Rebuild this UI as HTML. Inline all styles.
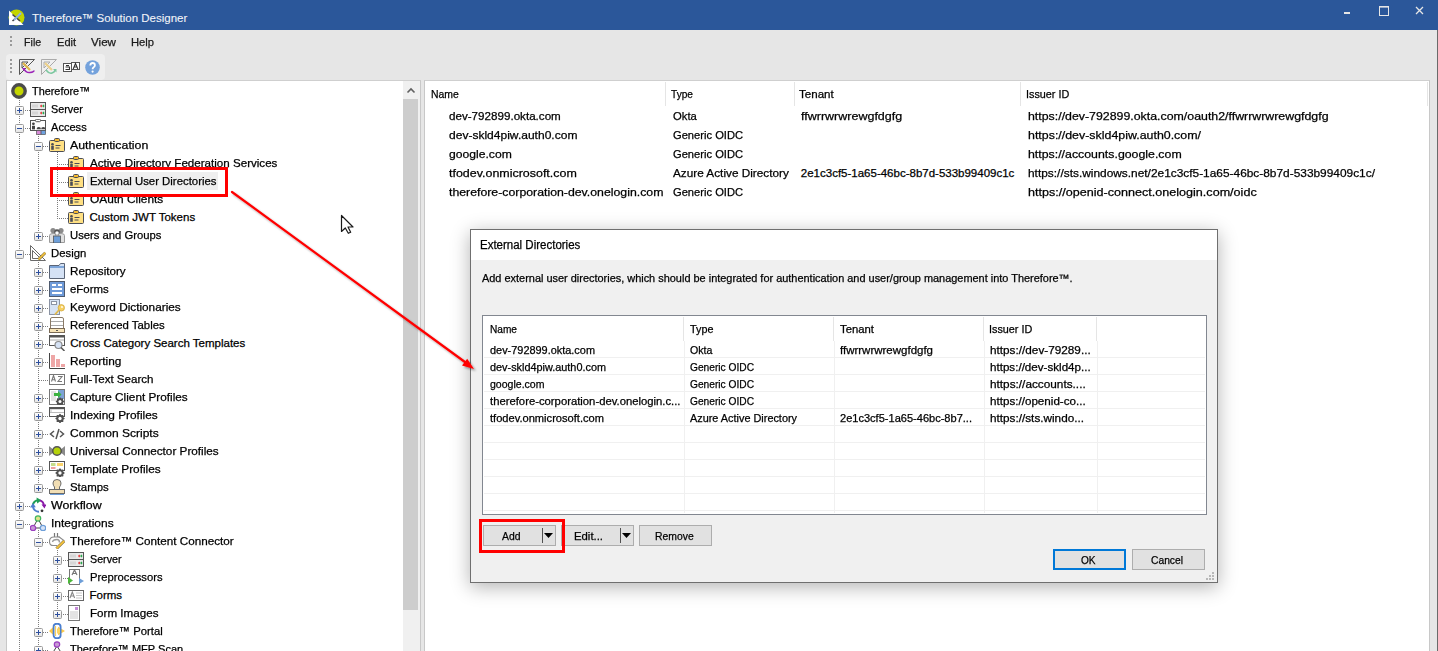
<!DOCTYPE html>
<html><head><meta charset="utf-8"><title>Therefore Solution Designer</title>
<style>
html,body{margin:0;padding:0}
body{width:1438px;height:651px;position:relative;overflow:hidden;background:#e6e6e6;font-family:"Liberation Sans",sans-serif}
.t{position:absolute;white-space:pre;line-height:14px;font-family:"Liberation Sans",sans-serif;-webkit-text-stroke:0.25px currentColor}
</style></head><body>
<div style="position:absolute;left:0px;top:0px;width:1438px;height:30px;background:#2b579a"></div>
<div class="t" style="left:32px;top:11px;font-size:11.5px;color:#f0f3f8;-webkit-text-stroke:0.1px #f0f3f8">Therefore™ Solution Designer</div>
<svg style="position:absolute;left:8px;top:9px;" width="17" height="17" viewBox="0 0 17 17"><circle cx="8.5" cy="8.5" r="8" fill="#c3d500"/><path d="M1 1.5V16H15.5Z" fill="#fff"/><path d="M4.5 5.5L12 12M12 5.5L4.5 12" stroke="#444" stroke-width="1.6"/><path d="M13 4L6 11" stroke="#8fb4e6" stroke-width="2"/></svg>
<svg style="position:absolute;left:1340px;top:8px;overflow:visible" width="90" height="10" viewBox="0 0 90 10"><rect x="4" y="4" width="6" height="2" fill="#e6e6e6"/><rect x="39.5" y="-1.5" width="9" height="9" fill="none" stroke="#e6e6e6" stroke-width="1"/><rect x="39" y="-2" width="10" height="1.6" fill="#e6e6e6"/><path d="M76 -1L83 6M83 -1L76 6" stroke="#e6e6e6" stroke-width="1.3"/></svg>
<div style="position:absolute;left:1437px;top:30px;width:1px;height:621px;background:#6a6a6a"></div>
<div style="position:absolute;left:10px;top:36px;width:2px;height:2px;background:#9a9a9a"></div>
<div style="position:absolute;left:10px;top:40px;width:2px;height:2px;background:#9a9a9a"></div>
<div style="position:absolute;left:10px;top:44px;width:2px;height:2px;background:#9a9a9a"></div>
<div style="position:absolute;left:6px;top:54px;width:99px;height:26px;background:#efefef;border-radius:4px"></div>
<div style="position:absolute;left:10px;top:59px;width:2px;height:2px;background:#9a9a9a"></div>
<div style="position:absolute;left:10px;top:63px;width:2px;height:2px;background:#9a9a9a"></div>
<div style="position:absolute;left:10px;top:67px;width:2px;height:2px;background:#9a9a9a"></div>
<div style="position:absolute;left:10px;top:71px;width:2px;height:2px;background:#9a9a9a"></div>
<svg style="position:absolute;left:19px;top:59px;" width="16" height="16" viewBox="0 0 16 16"><path d="M0.5 15.5V0.5H15.5Z M3 3h6L3 9z" fill="none" stroke="#555" stroke-width="1"/><path d="M4 4l7 7" stroke="#e0b64a" stroke-width="2.2"/><path d="M5 10q2 4 6 3.5t4-2" fill="none" stroke="#9b22b8" stroke-width="1.6"/><path d="M3 9l3.5 0 -1.5 3z" fill="#9b22b8"/></svg>
<svg style="position:absolute;left:41px;top:59px;" width="16" height="16" viewBox="0 0 16 16"><path d="M0.5 15.5V0.5H15.5Z M3 3h6L3 9z" fill="none" stroke="#aaa" stroke-width="1"/><path d="M4 4l7 7" stroke="#ecd08a" stroke-width="2.2"/><path d="M5 11q3 4 6 3t3-3" fill="none" stroke="#7cc8a0" stroke-width="1.6"/><path d="M12 10l3.5 0 0 3.5z" fill="#7cc8a0"/></svg>
<svg style="position:absolute;left:63px;top:62px;" width="17" height="11" viewBox="0 0 17 11"><rect x="0.5" y="1.5" width="8" height="8" fill="#fff" stroke="#555"/><path d="M2.5 7.5h4v-2.5h-4M3 3.5h3" fill="none" stroke="#333" stroke-width="1.1"/><rect x="8.5" y="0.5" width="8" height="7" fill="#fff" stroke="#555"/><path d="M10.2 7l2.3-5.5 2.3 5.5M11 5h3" fill="none" stroke="#333" stroke-width="1.1"/></svg>
<svg style="position:absolute;left:85px;top:60px;" width="16" height="16" viewBox="0 0 16 16"><circle cx="7.5" cy="7.5" r="7.3" fill="#74a2dc"/><path d="M5.3 5.6q0-2.6 2.3-2.6t2.3 2.3q0 1.3-1.2 2t-1.1 1.9" fill="none" stroke="#fff" stroke-width="1.8"/><circle cx="7.6" cy="11.6" r="1.1" fill="#fff"/></svg>
<div class="t" style="left:23.5px;top:35px;font-size:11.5px;color:#1a1a1a;transform:scaleX(0.9282);transform-origin:0 0;">File</div>
<div class="t" style="left:56.6px;top:35px;font-size:11.5px;color:#1a1a1a;transform:scaleX(0.9633);transform-origin:0 0;">Edit</div>
<div class="t" style="left:91px;top:35px;font-size:11.5px;color:#1a1a1a;transform:scaleX(1.0114);transform-origin:0 0;">View</div>
<div class="t" style="left:131.4px;top:35px;font-size:11.5px;color:#1a1a1a;transform:scaleX(0.9765);transform-origin:0 0;">Help</div>
<div style="position:absolute;left:6px;top:80px;width:415px;height:571px;background:#fff;border-left:1px solid #c8c8c8;border-top:1px solid #cfcfcf;border-right:1px solid #c8c8c8;box-sizing:border-box"></div>
<div style="position:absolute;left:403px;top:81px;width:17px;height:570px;background:#f0f0f0"></div>
<div style="position:absolute;left:403px;top:99px;width:15px;height:511px;background:#cdcdcd"></div>
<svg style="position:absolute;left:406px;top:86px;" width="10" height="8" viewBox="0 0 10 8"><path d="M1.5 6.5L5 3 8.5 6.5" fill="none" stroke="#606060" stroke-width="1.6"/></svg>
<div style="position:absolute;left:87px;top:172px;width:131px;height:18px;background:#efefef"></div>
<div style="position:absolute;left:19px;top:100px;width:1px;height:551px;background:repeating-linear-gradient(to bottom,#7d7d7d 0 1px,transparent 1px 2px)"></div>
<div style="position:absolute;left:38px;top:134px;width:1px;height:103px;background:repeating-linear-gradient(to bottom,#7d7d7d 0 1px,transparent 1px 2px)"></div>
<div style="position:absolute;left:57px;top:152px;width:1px;height:67px;background:repeating-linear-gradient(to bottom,#7d7d7d 0 1px,transparent 1px 2px)"></div>
<div style="position:absolute;left:38px;top:260px;width:1px;height:229px;background:repeating-linear-gradient(to bottom,#7d7d7d 0 1px,transparent 1px 2px)"></div>
<div style="position:absolute;left:38px;top:530px;width:1px;height:121px;background:repeating-linear-gradient(to bottom,#7d7d7d 0 1px,transparent 1px 2px)"></div>
<div style="position:absolute;left:57px;top:548px;width:1px;height:67px;background:repeating-linear-gradient(to bottom,#7d7d7d 0 1px,transparent 1px 2px)"></div>
<div style="position:absolute;left:21px;top:110px;width:9px;height:1px;background:repeating-linear-gradient(to right,#7d7d7d 0 1px,transparent 1px 2px)"></div>
<div style="position:absolute;left:21px;top:128px;width:9px;height:1px;background:repeating-linear-gradient(to right,#7d7d7d 0 1px,transparent 1px 2px)"></div>
<div style="position:absolute;left:39px;top:146px;width:10px;height:1px;background:repeating-linear-gradient(to right,#7d7d7d 0 1px,transparent 1px 2px)"></div>
<div style="position:absolute;left:59px;top:164px;width:9px;height:1px;background:repeating-linear-gradient(to right,#7d7d7d 0 1px,transparent 1px 2px)"></div>
<div style="position:absolute;left:59px;top:182px;width:9px;height:1px;background:repeating-linear-gradient(to right,#7d7d7d 0 1px,transparent 1px 2px)"></div>
<div style="position:absolute;left:59px;top:200px;width:9px;height:1px;background:repeating-linear-gradient(to right,#7d7d7d 0 1px,transparent 1px 2px)"></div>
<div style="position:absolute;left:59px;top:218px;width:9px;height:1px;background:repeating-linear-gradient(to right,#7d7d7d 0 1px,transparent 1px 2px)"></div>
<div style="position:absolute;left:39px;top:236px;width:10px;height:1px;background:repeating-linear-gradient(to right,#7d7d7d 0 1px,transparent 1px 2px)"></div>
<div style="position:absolute;left:21px;top:254px;width:9px;height:1px;background:repeating-linear-gradient(to right,#7d7d7d 0 1px,transparent 1px 2px)"></div>
<div style="position:absolute;left:39px;top:272px;width:10px;height:1px;background:repeating-linear-gradient(to right,#7d7d7d 0 1px,transparent 1px 2px)"></div>
<div style="position:absolute;left:39px;top:290px;width:10px;height:1px;background:repeating-linear-gradient(to right,#7d7d7d 0 1px,transparent 1px 2px)"></div>
<div style="position:absolute;left:39px;top:308px;width:10px;height:1px;background:repeating-linear-gradient(to right,#7d7d7d 0 1px,transparent 1px 2px)"></div>
<div style="position:absolute;left:39px;top:326px;width:10px;height:1px;background:repeating-linear-gradient(to right,#7d7d7d 0 1px,transparent 1px 2px)"></div>
<div style="position:absolute;left:39px;top:344px;width:10px;height:1px;background:repeating-linear-gradient(to right,#7d7d7d 0 1px,transparent 1px 2px)"></div>
<div style="position:absolute;left:39px;top:362px;width:10px;height:1px;background:repeating-linear-gradient(to right,#7d7d7d 0 1px,transparent 1px 2px)"></div>
<div style="position:absolute;left:39px;top:380px;width:10px;height:1px;background:repeating-linear-gradient(to right,#7d7d7d 0 1px,transparent 1px 2px)"></div>
<div style="position:absolute;left:39px;top:398px;width:10px;height:1px;background:repeating-linear-gradient(to right,#7d7d7d 0 1px,transparent 1px 2px)"></div>
<div style="position:absolute;left:39px;top:416px;width:10px;height:1px;background:repeating-linear-gradient(to right,#7d7d7d 0 1px,transparent 1px 2px)"></div>
<div style="position:absolute;left:39px;top:434px;width:10px;height:1px;background:repeating-linear-gradient(to right,#7d7d7d 0 1px,transparent 1px 2px)"></div>
<div style="position:absolute;left:39px;top:452px;width:10px;height:1px;background:repeating-linear-gradient(to right,#7d7d7d 0 1px,transparent 1px 2px)"></div>
<div style="position:absolute;left:39px;top:470px;width:10px;height:1px;background:repeating-linear-gradient(to right,#7d7d7d 0 1px,transparent 1px 2px)"></div>
<div style="position:absolute;left:39px;top:488px;width:10px;height:1px;background:repeating-linear-gradient(to right,#7d7d7d 0 1px,transparent 1px 2px)"></div>
<div style="position:absolute;left:21px;top:506px;width:9px;height:1px;background:repeating-linear-gradient(to right,#7d7d7d 0 1px,transparent 1px 2px)"></div>
<div style="position:absolute;left:21px;top:524px;width:9px;height:1px;background:repeating-linear-gradient(to right,#7d7d7d 0 1px,transparent 1px 2px)"></div>
<div style="position:absolute;left:39px;top:542px;width:10px;height:1px;background:repeating-linear-gradient(to right,#7d7d7d 0 1px,transparent 1px 2px)"></div>
<div style="position:absolute;left:59px;top:560px;width:9px;height:1px;background:repeating-linear-gradient(to right,#7d7d7d 0 1px,transparent 1px 2px)"></div>
<div style="position:absolute;left:59px;top:578px;width:9px;height:1px;background:repeating-linear-gradient(to right,#7d7d7d 0 1px,transparent 1px 2px)"></div>
<div style="position:absolute;left:59px;top:596px;width:9px;height:1px;background:repeating-linear-gradient(to right,#7d7d7d 0 1px,transparent 1px 2px)"></div>
<div style="position:absolute;left:59px;top:614px;width:9px;height:1px;background:repeating-linear-gradient(to right,#7d7d7d 0 1px,transparent 1px 2px)"></div>
<div style="position:absolute;left:39px;top:632px;width:10px;height:1px;background:repeating-linear-gradient(to right,#7d7d7d 0 1px,transparent 1px 2px)"></div>
<div style="position:absolute;left:39px;top:650px;width:10px;height:1px;background:repeating-linear-gradient(to right,#7d7d7d 0 1px,transparent 1px 2px)"></div>
<svg style="position:absolute;left:11px;top:83px;" width="16" height="16" viewBox="0 0 16 16"><circle cx="8" cy="8" r="6.2" fill="#c4d600" stroke="#4b4b4b" stroke-width="3.4"/></svg>
<div class="t" style="left:32.4px;top:84px;font-size:11.5px;color:#000;transform:scaleX(0.9453);transform-origin:0 0;">Therefore™</div>
<svg style="position:absolute;left:15px;top:106px;" width="9" height="9" viewBox="0 0 9 9"><defs><linearGradient id="bg1" x1="0" y1="0" x2="0" y2="1"><stop offset="0" stop-color="#fff"/><stop offset="1" stop-color="#e4e4e4"/></linearGradient></defs><rect x="0.5" y="0.5" width="8" height="8" rx="1" fill="url(#bg1)" stroke="#9a9a9a"/><path d="M2 4.5h5" stroke="#2d4f9e" stroke-width="1"/><path d="M4.5 2v5" stroke="#2d4f9e"/></svg>
<svg style="position:absolute;left:30px;top:101px;" width="16" height="16" viewBox="0 0 16 16"><rect x="0.5" y="1.5" width="15" height="7" fill="#e9e9e9" stroke="#555"/><rect x="0.5" y="8.5" width="15" height="7" fill="#e9e9e9" stroke="#555"/><path d="M3 3.5v3M5 3.5v3M7 3.5v3M3 10.5v3M5 10.5v3M7 10.5v3" stroke="#c2c2c2"/><path d="M10 5l1.2-1.5 1.2 1.5-1.2 1.5z M10 12l1.2-1.5 1.2 1.5-1.2 1.5z" fill="#e53a3a"/><path d="M12.2 5l1.2-1.5 1.2 1.5-1.2 1.5z M12.2 12l1.2-1.5 1.2 1.5-1.2 1.5z" fill="#25a84a"/></svg>
<div class="t" style="left:51.3px;top:102px;font-size:11.5px;color:#000;transform:scaleX(0.9387);transform-origin:0 0;">Server</div>
<svg style="position:absolute;left:15px;top:124px;" width="9" height="9" viewBox="0 0 9 9"><defs><linearGradient id="bg2" x1="0" y1="0" x2="0" y2="1"><stop offset="0" stop-color="#fff"/><stop offset="1" stop-color="#e4e4e4"/></linearGradient></defs><rect x="0.5" y="0.5" width="8" height="8" rx="1" fill="url(#bg2)" stroke="#9a9a9a"/><path d="M2 4.5h5" stroke="#2d4f9e" stroke-width="1"/></svg>
<svg style="position:absolute;left:30px;top:119px;" width="16" height="16" viewBox="0 0 16 16"><rect x="0.5" y="1.5" width="15" height="10" fill="#fff" stroke="#555"/><rect x="5.5" y="0.3" width="5" height="2.4" rx="1" fill="#fff" stroke="#555"/><circle cx="3.4" cy="4.8" r="1.4" fill="#444"/><rect x="2" y="6.8" width="3" height="3.6" fill="#444"/><path d="M6.6 10.2a2.2 2.2 0 0 1 4.4 0z M11.1 10.2a2.2 2.2 0 0 1 4.4 0z" fill="#444"/><rect x="6.5" y="11.5" width="4.6" height="4" fill="#d68ad6" stroke="#555" stroke-width="0.7"/><rect x="11.1" y="11.5" width="4.4" height="4" fill="#6fa2e0" stroke="#555" stroke-width="0.7"/></svg>
<div class="t" style="left:51.3px;top:120px;font-size:11.5px;color:#000;transform:scaleX(0.9628);transform-origin:0 0;">Access</div>
<svg style="position:absolute;left:34px;top:142px;" width="9" height="9" viewBox="0 0 9 9"><defs><linearGradient id="bg3" x1="0" y1="0" x2="0" y2="1"><stop offset="0" stop-color="#fff"/><stop offset="1" stop-color="#e4e4e4"/></linearGradient></defs><rect x="0.5" y="0.5" width="8" height="8" rx="1" fill="url(#bg3)" stroke="#9a9a9a"/><path d="M2 4.5h5" stroke="#2d4f9e" stroke-width="1"/></svg>
<svg style="position:absolute;left:49px;top:137px;" width="16" height="16" viewBox="0 0 16 16"><rect x="0.5" y="3.5" width="15" height="11" rx="1" fill="#ffe083" stroke="#4a4d57"/><rect x="5.5" y="1.5" width="5" height="3" rx="1" fill="#f5b92e" stroke="#4a4d57"/><circle cx="3.5" cy="7.2" r="1.3" fill="#4a4d57"/><rect x="2.2" y="8.8" width="2.6" height="4" fill="#4a4d57"/><path d="M6.5 8.5h5M6.5 11h4" stroke="#4a4d57" stroke-width="1.1"/></svg>
<div class="t" style="left:70.3px;top:138px;font-size:11.5px;color:#000;transform:scaleX(1.0742);transform-origin:0 0;">Authentication</div>
<svg style="position:absolute;left:68px;top:155px;" width="16" height="16" viewBox="0 0 16 16"><rect x="0.5" y="3.5" width="15" height="11" rx="1" fill="#ffe083" stroke="#4a4d57"/><rect x="5.5" y="1.5" width="5" height="3" rx="1" fill="#f5b92e" stroke="#4a4d57"/><circle cx="3.5" cy="7.2" r="1.3" fill="#4a4d57"/><rect x="2.2" y="8.8" width="2.6" height="4" fill="#4a4d57"/><path d="M6.5 8.5h5M6.5 11h4" stroke="#4a4d57" stroke-width="1.1"/></svg>
<div class="t" style="left:89.5px;top:156px;font-size:11.5px;color:#000;transform:scaleX(1.0076);transform-origin:0 0;">Active Directory Federation Services</div>
<svg style="position:absolute;left:68px;top:173px;" width="16" height="16" viewBox="0 0 16 16"><rect x="0.5" y="3.5" width="15" height="11" rx="1" fill="#ffe083" stroke="#4a4d57"/><rect x="5.5" y="1.5" width="5" height="3" rx="1" fill="#f5b92e" stroke="#4a4d57"/><circle cx="3.5" cy="7.2" r="1.3" fill="#4a4d57"/><rect x="2.2" y="8.8" width="2.6" height="4" fill="#4a4d57"/><path d="M6.5 8.5h5M6.5 11h4" stroke="#4a4d57" stroke-width="1.1"/></svg>
<div class="t" style="left:89.5px;top:174px;font-size:11.5px;color:#000;transform:scaleX(0.9896);transform-origin:0 0;">External User Directories</div>
<svg style="position:absolute;left:68px;top:191px;" width="16" height="16" viewBox="0 0 16 16"><rect x="0.5" y="3.5" width="15" height="11" rx="1" fill="#ffe083" stroke="#4a4d57"/><rect x="5.5" y="1.5" width="5" height="3" rx="1" fill="#f5b92e" stroke="#4a4d57"/><circle cx="3.5" cy="7.2" r="1.3" fill="#4a4d57"/><rect x="2.2" y="8.8" width="2.6" height="4" fill="#4a4d57"/><path d="M6.5 8.5h5M6.5 11h4" stroke="#4a4d57" stroke-width="1.1"/></svg>
<div class="t" style="left:89.5px;top:192px;font-size:11.5px;color:#000;transform:scaleX(1.0331);transform-origin:0 0;">OAuth Clients</div>
<svg style="position:absolute;left:68px;top:209px;" width="16" height="16" viewBox="0 0 16 16"><rect x="0.5" y="3.5" width="15" height="11" rx="1" fill="#ffe083" stroke="#4a4d57"/><rect x="5.5" y="1.5" width="5" height="3" rx="1" fill="#f5b92e" stroke="#4a4d57"/><circle cx="3.5" cy="7.2" r="1.3" fill="#4a4d57"/><rect x="2.2" y="8.8" width="2.6" height="4" fill="#4a4d57"/><path d="M6.5 8.5h5M6.5 11h4" stroke="#4a4d57" stroke-width="1.1"/></svg>
<div class="t" style="left:89.5px;top:210px;font-size:11.5px;color:#000;">Custom JWT Tokens</div>
<svg style="position:absolute;left:34px;top:232px;" width="9" height="9" viewBox="0 0 9 9"><defs><linearGradient id="bg8" x1="0" y1="0" x2="0" y2="1"><stop offset="0" stop-color="#fff"/><stop offset="1" stop-color="#e4e4e4"/></linearGradient></defs><rect x="0.5" y="0.5" width="8" height="8" rx="1" fill="url(#bg8)" stroke="#9a9a9a"/><path d="M2 4.5h5" stroke="#2d4f9e" stroke-width="1"/><path d="M4.5 2v5" stroke="#2d4f9e"/></svg>
<svg style="position:absolute;left:49px;top:227px;" width="16" height="16" viewBox="0 0 16 16"><circle cx="4" cy="3.5" r="2.6" fill="#8a8a8a"/><circle cx="12" cy="3.5" r="2.6" fill="#8a8a8a"/><path d="M0.5 15.5V8.5q0-2 3.5-2q2 0 3 1v8z M15.5 15.5V8.5q0-2-3.5-2q-2 0-3 1v8z" fill="#e0e0e0" stroke="#9a9a9a"/><circle cx="8" cy="5" r="2.8" fill="#555"/><circle cx="8" cy="6" r="1.8" fill="#fff"/><rect x="4.5" y="9" width="7" height="7" fill="#6d9ed8" stroke="#555" stroke-width="0.8"/></svg>
<div class="t" style="left:70.3px;top:228px;font-size:11.5px;color:#000;transform:scaleX(0.9804);transform-origin:0 0;">Users and Groups</div>
<svg style="position:absolute;left:15px;top:250px;" width="9" height="9" viewBox="0 0 9 9"><defs><linearGradient id="bg9" x1="0" y1="0" x2="0" y2="1"><stop offset="0" stop-color="#fff"/><stop offset="1" stop-color="#e4e4e4"/></linearGradient></defs><rect x="0.5" y="0.5" width="8" height="8" rx="1" fill="url(#bg9)" stroke="#9a9a9a"/><path d="M2 4.5h5" stroke="#2d4f9e" stroke-width="1"/></svg>
<svg style="position:absolute;left:30px;top:245px;" width="16" height="16" viewBox="0 0 16 16"><path d="M0.5 0.5V15.5H15.5Z M2.5 5.5V13.5H10.5Z" fill="none" stroke="#6a6a6a" stroke-width="1"/><path d="M15.3 7.7L8.5 14.5" stroke="#7a6a40" stroke-width="2.8"/><path d="M15.3 7.7L8.5 14.5" stroke="#f3c23c" stroke-width="1.7"/></svg>
<div class="t" style="left:51.3px;top:246px;font-size:11.5px;color:#000;transform:scaleX(0.9857);transform-origin:0 0;">Design</div>
<svg style="position:absolute;left:34px;top:268px;" width="9" height="9" viewBox="0 0 9 9"><defs><linearGradient id="bg10" x1="0" y1="0" x2="0" y2="1"><stop offset="0" stop-color="#fff"/><stop offset="1" stop-color="#e4e4e4"/></linearGradient></defs><rect x="0.5" y="0.5" width="8" height="8" rx="1" fill="url(#bg10)" stroke="#9a9a9a"/><path d="M2 4.5h5" stroke="#2d4f9e" stroke-width="1"/><path d="M4.5 2v5" stroke="#2d4f9e"/></svg>
<svg style="position:absolute;left:49px;top:263px;" width="16" height="16" viewBox="0 0 16 16"><path d="M0.5 2.5H10l1.5-2H15.5V15.5H0.5Z" fill="#d5e2f5" stroke="#5b6577"/><rect x="1" y="3" width="14" height="2" fill="#7ea6da"/></svg>
<div class="t" style="left:70.3px;top:264px;font-size:11.5px;color:#000;transform:scaleX(1.0133);transform-origin:0 0;">Repository</div>
<svg style="position:absolute;left:34px;top:286px;" width="9" height="9" viewBox="0 0 9 9"><defs><linearGradient id="bg11" x1="0" y1="0" x2="0" y2="1"><stop offset="0" stop-color="#fff"/><stop offset="1" stop-color="#e4e4e4"/></linearGradient></defs><rect x="0.5" y="0.5" width="8" height="8" rx="1" fill="url(#bg11)" stroke="#9a9a9a"/><path d="M2 4.5h5" stroke="#2d4f9e" stroke-width="1"/><path d="M4.5 2v5" stroke="#2d4f9e"/></svg>
<svg style="position:absolute;left:49px;top:281px;" width="16" height="16" viewBox="0 0 16 16"><rect x="0.5" y="0.5" width="15" height="15" fill="#6f9bd9" stroke="#4e5a6e"/><rect x="3" y="3" width="4" height="2" fill="#fff"/><rect x="9" y="3" width="4" height="2" fill="#fff"/><rect x="3" y="7" width="10" height="2" fill="#fff"/><rect x="3" y="11" width="10" height="2" fill="#fff"/></svg>
<div class="t" style="left:70.3px;top:282px;font-size:11.5px;color:#000;transform:scaleX(0.9927);transform-origin:0 0;">eForms</div>
<svg style="position:absolute;left:34px;top:304px;" width="9" height="9" viewBox="0 0 9 9"><defs><linearGradient id="bg12" x1="0" y1="0" x2="0" y2="1"><stop offset="0" stop-color="#fff"/><stop offset="1" stop-color="#e4e4e4"/></linearGradient></defs><rect x="0.5" y="0.5" width="8" height="8" rx="1" fill="url(#bg12)" stroke="#9a9a9a"/><path d="M2 4.5h5" stroke="#2d4f9e" stroke-width="1"/><path d="M4.5 2v5" stroke="#2d4f9e"/></svg>
<svg style="position:absolute;left:49px;top:299px;" width="16" height="16" viewBox="0 0 16 16"><rect x="0.5" y="0.5" width="10" height="15" fill="#d6e2f4" stroke="#8b93a3"/><rect x="2.5" y="2.5" width="5" height="3" fill="#fff" stroke="#8b93a3"/><path d="M10 11L6 15.5" stroke="#e1b84a" stroke-width="1.8"/><circle cx="12.3" cy="8.8" r="3.2" fill="#f7d063" stroke="#d2a93e" stroke-width="0.8"/><circle cx="13" cy="8" r="0.9" fill="#fff"/></svg>
<div class="t" style="left:70.3px;top:300px;font-size:11.5px;color:#000;transform:scaleX(1.0249);transform-origin:0 0;">Keyword Dictionaries</div>
<svg style="position:absolute;left:34px;top:322px;" width="9" height="9" viewBox="0 0 9 9"><defs><linearGradient id="bg13" x1="0" y1="0" x2="0" y2="1"><stop offset="0" stop-color="#fff"/><stop offset="1" stop-color="#e4e4e4"/></linearGradient></defs><rect x="0.5" y="0.5" width="8" height="8" rx="1" fill="url(#bg13)" stroke="#9a9a9a"/><path d="M2 4.5h5" stroke="#2d4f9e" stroke-width="1"/><path d="M4.5 2v5" stroke="#2d4f9e"/></svg>
<svg style="position:absolute;left:49px;top:317px;" width="16" height="16" viewBox="0 0 16 16"><path d="M1.5 15.5V2q0-1.5 1.5-1.5h10q1.5 0 1.5 1.5V15.5" fill="#fff" stroke="#8a7a66"/><path d="M2 4.5h12M2 8.5h12" stroke="#aaa" stroke-width="1.2"/><rect x="0.5" y="11.5" width="15" height="4" fill="#f7e4b8" stroke="#7a6a55"/><rect x="7" y="13" width="2" height="1" fill="#555"/></svg>
<div class="t" style="left:70.3px;top:318px;font-size:11.5px;color:#000;transform:scaleX(0.9897);transform-origin:0 0;">Referenced Tables</div>
<svg style="position:absolute;left:34px;top:340px;" width="9" height="9" viewBox="0 0 9 9"><defs><linearGradient id="bg14" x1="0" y1="0" x2="0" y2="1"><stop offset="0" stop-color="#fff"/><stop offset="1" stop-color="#e4e4e4"/></linearGradient></defs><rect x="0.5" y="0.5" width="8" height="8" rx="1" fill="url(#bg14)" stroke="#9a9a9a"/><path d="M2 4.5h5" stroke="#2d4f9e" stroke-width="1"/><path d="M4.5 2v5" stroke="#2d4f9e"/></svg>
<svg style="position:absolute;left:49px;top:335px;" width="16" height="16" viewBox="0 0 16 16"><rect x="0.5" y="0.5" width="15" height="10" fill="#fff" stroke="#555"/><rect x="1" y="1" width="14" height="1.5" fill="#555"/><path d="M1 5h14" stroke="#aaa"/><circle cx="9.5" cy="10" r="3.5" fill="#d5e2f5" stroke="#8a8a8a" stroke-width="1.2"/><path d="M12 12.5l3.5 3.5" stroke="#555" stroke-width="1.5"/></svg>
<div class="t" style="left:70.3px;top:336px;font-size:11.5px;color:#000;">Cross Category Search Templates</div>
<svg style="position:absolute;left:34px;top:358px;" width="9" height="9" viewBox="0 0 9 9"><defs><linearGradient id="bg15" x1="0" y1="0" x2="0" y2="1"><stop offset="0" stop-color="#fff"/><stop offset="1" stop-color="#e4e4e4"/></linearGradient></defs><rect x="0.5" y="0.5" width="8" height="8" rx="1" fill="url(#bg15)" stroke="#9a9a9a"/><path d="M2 4.5h5" stroke="#2d4f9e" stroke-width="1"/><path d="M4.5 2v5" stroke="#2d4f9e"/></svg>
<svg style="position:absolute;left:49px;top:353px;" width="16" height="16" viewBox="0 0 16 16"><path d="M0.5 0V15.5H16" fill="none" stroke="#444"/><rect x="2" y="2" width="4" height="12" fill="#eea6a6"/><rect x="7" y="6" width="4" height="8" fill="#eea6a6"/><rect x="12" y="11" width="4" height="3" fill="#eea6a6"/></svg>
<div class="t" style="left:70.3px;top:354px;font-size:11.5px;color:#000;transform:scaleX(1.0286);transform-origin:0 0;">Reporting</div>
<svg style="position:absolute;left:49px;top:371px;" width="16" height="16" viewBox="0 0 16 16"><rect x="0.5" y="3.5" width="15" height="10" fill="#fff" stroke="#777"/><path d="M2.5 10.5l2-6 2 6M3.2 8.7h2.6" fill="none" stroke="#777" stroke-width="1.1"/><path d="M9 5.5h4l-4 5h4" fill="none" stroke="#777" stroke-width="1.1"/></svg>
<div class="t" style="left:70.3px;top:372px;font-size:11.5px;color:#000;transform:scaleX(1.0049);transform-origin:0 0;">Full-Text Search</div>
<svg style="position:absolute;left:34px;top:394px;" width="9" height="9" viewBox="0 0 9 9"><defs><linearGradient id="bg17" x1="0" y1="0" x2="0" y2="1"><stop offset="0" stop-color="#fff"/><stop offset="1" stop-color="#e4e4e4"/></linearGradient></defs><rect x="0.5" y="0.5" width="8" height="8" rx="1" fill="url(#bg17)" stroke="#9a9a9a"/><path d="M2 4.5h5" stroke="#2d4f9e" stroke-width="1"/><path d="M4.5 2v5" stroke="#2d4f9e"/></svg>
<svg style="position:absolute;left:49px;top:389px;" width="16" height="16" viewBox="0 0 16 16"><rect x="0.5" y="0.5" width="15" height="15" fill="#fff" stroke="#777"/><rect x="9" y="1" width="6" height="9" fill="#7ca2d6"/><path d="M2 3h5M2 5h5M2 7h5M2 9h5M2 11h5" stroke="#c8c8c8"/><path d="M5 4h4v-2l3.5 3.5L9 9V7H5z" fill="#3bb33f"/><polygon points="14.60,12.50 13.39,13.49 13.55,15.05 11.99,14.89 11.00,16.10 10.01,14.89 8.45,15.05 8.61,13.49 7.40,12.50 8.61,11.51 8.45,9.95 10.01,10.11 11.00,8.90 11.99,10.11 13.55,9.95 13.39,11.51" fill="#4f4f4f" stroke="#4f4f4f" stroke-width="1.2" stroke-linejoin="round"/><circle cx="11" cy="12.5" r="1.51" fill="#fff"/></svg>
<div class="t" style="left:70.3px;top:390px;font-size:11.5px;color:#000;transform:scaleX(1.0229);transform-origin:0 0;">Capture Client Profiles</div>
<svg style="position:absolute;left:34px;top:412px;" width="9" height="9" viewBox="0 0 9 9"><defs><linearGradient id="bg18" x1="0" y1="0" x2="0" y2="1"><stop offset="0" stop-color="#fff"/><stop offset="1" stop-color="#e4e4e4"/></linearGradient></defs><rect x="0.5" y="0.5" width="8" height="8" rx="1" fill="url(#bg18)" stroke="#9a9a9a"/><path d="M2 4.5h5" stroke="#2d4f9e" stroke-width="1"/><path d="M4.5 2v5" stroke="#2d4f9e"/></svg>
<svg style="position:absolute;left:49px;top:407px;" width="16" height="16" viewBox="0 0 16 16"><rect x="0.5" y="0.5" width="15" height="9" fill="#fff" stroke="#555"/><rect x="1" y="1" width="14" height="1.2" fill="#555"/><path d="M2 2.5v2.5M1 5.5h14" stroke="#bbb"/><polygon points="15.00,11.50 13.66,12.60 13.83,14.33 12.10,14.16 11.00,15.50 9.90,14.16 8.17,14.33 8.34,12.60 7.00,11.50 8.34,10.40 8.17,8.67 9.90,8.84 11.00,7.50 12.10,8.84 13.83,8.67 13.66,10.40" fill="#4f4f4f" stroke="#4f4f4f" stroke-width="1.2" stroke-linejoin="round"/><circle cx="11" cy="11.5" r="1.68" fill="#fff"/></svg>
<div class="t" style="left:70.3px;top:408px;font-size:11.5px;color:#000;transform:scaleX(1.0314);transform-origin:0 0;">Indexing Profiles</div>
<svg style="position:absolute;left:34px;top:430px;" width="9" height="9" viewBox="0 0 9 9"><defs><linearGradient id="bg19" x1="0" y1="0" x2="0" y2="1"><stop offset="0" stop-color="#fff"/><stop offset="1" stop-color="#e4e4e4"/></linearGradient></defs><rect x="0.5" y="0.5" width="8" height="8" rx="1" fill="url(#bg19)" stroke="#9a9a9a"/><path d="M2 4.5h5" stroke="#2d4f9e" stroke-width="1"/><path d="M4.5 2v5" stroke="#2d4f9e"/></svg>
<svg style="position:absolute;left:49px;top:425px;" width="16" height="16" viewBox="0 0 16 16"><path d="M5 6L1.5 9 5 12M7 14l3-10M11 6l3.5 3L11 12" fill="none" stroke="#555" stroke-width="1.5"/></svg>
<div class="t" style="left:70.3px;top:426px;font-size:11.5px;color:#000;transform:scaleX(1.0435);transform-origin:0 0;">Common Scripts</div>
<svg style="position:absolute;left:34px;top:448px;" width="9" height="9" viewBox="0 0 9 9"><defs><linearGradient id="bg20" x1="0" y1="0" x2="0" y2="1"><stop offset="0" stop-color="#fff"/><stop offset="1" stop-color="#e4e4e4"/></linearGradient></defs><rect x="0.5" y="0.5" width="8" height="8" rx="1" fill="url(#bg20)" stroke="#9a9a9a"/><path d="M2 4.5h5" stroke="#2d4f9e" stroke-width="1"/><path d="M4.5 2v5" stroke="#2d4f9e"/></svg>
<svg style="position:absolute;left:49px;top:443px;" width="16" height="16" viewBox="0 0 16 16"><path d="M0 3v10l6-5zM16 3v10l-6-5z" fill="#8a8a8a"/><circle cx="8" cy="8" r="4.3" fill="#b5d20a" stroke="#555" stroke-width="1.6"/></svg>
<div class="t" style="left:70.3px;top:444px;font-size:11.5px;color:#000;transform:scaleX(1.0203);transform-origin:0 0;">Universal Connector Profiles</div>
<svg style="position:absolute;left:34px;top:466px;" width="9" height="9" viewBox="0 0 9 9"><defs><linearGradient id="bg21" x1="0" y1="0" x2="0" y2="1"><stop offset="0" stop-color="#fff"/><stop offset="1" stop-color="#e4e4e4"/></linearGradient></defs><rect x="0.5" y="0.5" width="8" height="8" rx="1" fill="url(#bg21)" stroke="#9a9a9a"/><path d="M2 4.5h5" stroke="#2d4f9e" stroke-width="1"/><path d="M4.5 2v5" stroke="#2d4f9e"/></svg>
<svg style="position:absolute;left:49px;top:461px;" width="16" height="16" viewBox="0 0 16 16"><rect x="0.5" y="0.5" width="15" height="9" fill="#fff" stroke="#555"/><rect x="2" y="2" width="4.5" height="3" fill="#c5dd8a"/><rect x="8" y="2" width="6" height="3" fill="#fbd46b"/><rect x="2" y="6" width="4.5" height="2" fill="#ee9f9f"/><polygon points="15.00,12.00 13.66,13.10 13.83,14.83 12.10,14.66 11.00,16.00 9.90,14.66 8.17,14.83 8.34,13.10 7.00,12.00 8.34,10.90 8.17,9.17 9.90,9.34 11.00,8.00 12.10,9.34 13.83,9.17 13.66,10.90" fill="#4f4f4f" stroke="#4f4f4f" stroke-width="1.2" stroke-linejoin="round"/><circle cx="11" cy="12" r="1.68" fill="#fff"/></svg>
<div class="t" style="left:70.3px;top:462px;font-size:11.5px;color:#000;transform:scaleX(1.0281);transform-origin:0 0;">Template Profiles</div>
<svg style="position:absolute;left:34px;top:484px;" width="9" height="9" viewBox="0 0 9 9"><defs><linearGradient id="bg22" x1="0" y1="0" x2="0" y2="1"><stop offset="0" stop-color="#fff"/><stop offset="1" stop-color="#e4e4e4"/></linearGradient></defs><rect x="0.5" y="0.5" width="8" height="8" rx="1" fill="url(#bg22)" stroke="#9a9a9a"/><path d="M2 4.5h5" stroke="#2d4f9e" stroke-width="1"/><path d="M4.5 2v5" stroke="#2d4f9e"/></svg>
<svg style="position:absolute;left:49px;top:479px;" width="16" height="16" viewBox="0 0 16 16"><path d="M5.5 10.5V8q-1.5-1.5-1.5-4q0-3.5 4-3.5t4 3.5q0 2.5-1.5 4v2.5" fill="#f1deb4" stroke="#6a6a6a"/><rect x="0.5" y="10.5" width="15" height="4" fill="#f1deb4" stroke="#6a6a6a"/><rect x="1" y="15" width="14" height="1" fill="#6d9ed8"/></svg>
<div class="t" style="left:70.3px;top:480px;font-size:11.5px;color:#000;transform:scaleX(0.9923);transform-origin:0 0;">Stamps</div>
<svg style="position:absolute;left:15px;top:502px;" width="9" height="9" viewBox="0 0 9 9"><defs><linearGradient id="bg23" x1="0" y1="0" x2="0" y2="1"><stop offset="0" stop-color="#fff"/><stop offset="1" stop-color="#e4e4e4"/></linearGradient></defs><rect x="0.5" y="0.5" width="8" height="8" rx="1" fill="url(#bg23)" stroke="#9a9a9a"/><path d="M2 4.5h5" stroke="#2d4f9e" stroke-width="1"/><path d="M4.5 2v5" stroke="#2d4f9e"/></svg>
<svg style="position:absolute;left:30px;top:497px;" width="16" height="16" viewBox="0 0 16 16"><path d="M2.8 8.5A5.5 5.5 0 0 1 8.5 3.2" fill="none" stroke="#1f9e55" stroke-width="2"/><path d="M6.5 0.5L11.5 3.2 7.2 6.5Z" fill="#1f9e55"/><path d="M10 3.4A5.5 5.5 0 0 1 13.8 8.5" fill="none" stroke="#8a1aa8" stroke-width="2"/><path d="M11.5 7.5L16.3 7.5 14.5 11.5Z" fill="#8a1aa8"/><path d="M9 14.6A5.5 5.5 0 0 1 3 9" fill="none" stroke="#4f7fcf" stroke-width="2"/><path d="M0 10.5L3 6 5.8 10.2Z" fill="#4f7fcf"/><circle cx="12" cy="13.8" r="1.4" fill="#333"/></svg>
<div class="t" style="left:51.3px;top:498px;font-size:11.5px;color:#000;transform:scaleX(1.0769);transform-origin:0 0;">Workflow</div>
<svg style="position:absolute;left:15px;top:520px;" width="9" height="9" viewBox="0 0 9 9"><defs><linearGradient id="bg24" x1="0" y1="0" x2="0" y2="1"><stop offset="0" stop-color="#fff"/><stop offset="1" stop-color="#e4e4e4"/></linearGradient></defs><rect x="0.5" y="0.5" width="8" height="8" rx="1" fill="url(#bg24)" stroke="#9a9a9a"/><path d="M2 4.5h5" stroke="#2d4f9e" stroke-width="1"/></svg>
<svg style="position:absolute;left:30px;top:515px;" width="16" height="16" viewBox="0 0 16 16"><path d="M8 3.5L3 13M8 3.5l5 9.5M3 13h10" stroke="#444" stroke-width="1"/><circle cx="8" cy="3.5" r="2.7" fill="#dfe38a" stroke="#3fb560" stroke-width="1.2"/><circle cx="3" cy="13" r="2.7" fill="#c99ad6" stroke="#9b3fc0" stroke-width="1.2"/><circle cx="13" cy="13" r="2.7" fill="#d6e3f7" stroke="#6d9ed8" stroke-width="1.2"/></svg>
<div class="t" style="left:51.3px;top:516px;font-size:11.5px;color:#000;transform:scaleX(1.0431);transform-origin:0 0;">Integrations</div>
<svg style="position:absolute;left:34px;top:538px;" width="9" height="9" viewBox="0 0 9 9"><defs><linearGradient id="bg25" x1="0" y1="0" x2="0" y2="1"><stop offset="0" stop-color="#fff"/><stop offset="1" stop-color="#e4e4e4"/></linearGradient></defs><rect x="0.5" y="0.5" width="8" height="8" rx="1" fill="url(#bg25)" stroke="#9a9a9a"/><path d="M2 4.5h5" stroke="#2d4f9e" stroke-width="1"/></svg>
<svg style="position:absolute;left:49px;top:533px;" width="16" height="16" viewBox="0 0 16 16"><path d="M5.5 0v4M8.5 0v4" stroke="#777" stroke-width="1.2"/><path d="M10.5 4H5Q0.5 4 0.5 8.5T5 12.5H8" fill="none" stroke="#8a8a8a" stroke-width="1.1"/><path d="M9.5 3.5L15 7.5 12.5 10" fill="none" stroke="#8a8a8a" stroke-width="1.1"/><path d="M3.5 9Q4 6.5 8 6.5Q10.5 6.5 10.5 9.5" fill="none" stroke="#9a9a9a" stroke-width="1.4"/><path d="M15.2 8L7.5 15.5" stroke="#7a6a40" stroke-width="3"/><path d="M15.2 8L7.5 15.5" stroke="#f3c23c" stroke-width="1.8"/></svg>
<div class="t" style="left:70.3px;top:534px;font-size:11.5px;color:#000;transform:scaleX(1.0162);transform-origin:0 0;">Therefore™ Content Connector</div>
<svg style="position:absolute;left:53px;top:556px;" width="9" height="9" viewBox="0 0 9 9"><defs><linearGradient id="bg26" x1="0" y1="0" x2="0" y2="1"><stop offset="0" stop-color="#fff"/><stop offset="1" stop-color="#e4e4e4"/></linearGradient></defs><rect x="0.5" y="0.5" width="8" height="8" rx="1" fill="url(#bg26)" stroke="#9a9a9a"/><path d="M2 4.5h5" stroke="#2d4f9e" stroke-width="1"/><path d="M4.5 2v5" stroke="#2d4f9e"/></svg>
<svg style="position:absolute;left:68px;top:551px;" width="16" height="16" viewBox="0 0 16 16"><rect x="0.5" y="1.5" width="15" height="7" fill="#e9e9e9" stroke="#555"/><rect x="0.5" y="8.5" width="15" height="7" fill="#e9e9e9" stroke="#555"/><path d="M3 3.5v3M5 3.5v3M7 3.5v3M3 10.5v3M5 10.5v3M7 10.5v3" stroke="#c2c2c2"/><path d="M10 5l1.2-1.5 1.2 1.5-1.2 1.5z M10 12l1.2-1.5 1.2 1.5-1.2 1.5z" fill="#e53a3a"/><path d="M12.2 5l1.2-1.5 1.2 1.5-1.2 1.5z M12.2 12l1.2-1.5 1.2 1.5-1.2 1.5z" fill="#25a84a"/></svg>
<div class="t" style="left:89.5px;top:552px;font-size:11.5px;color:#000;transform:scaleX(0.9299);transform-origin:0 0;">Server</div>
<svg style="position:absolute;left:53px;top:574px;" width="9" height="9" viewBox="0 0 9 9"><defs><linearGradient id="bg27" x1="0" y1="0" x2="0" y2="1"><stop offset="0" stop-color="#fff"/><stop offset="1" stop-color="#e4e4e4"/></linearGradient></defs><rect x="0.5" y="0.5" width="8" height="8" rx="1" fill="url(#bg27)" stroke="#9a9a9a"/><path d="M2 4.5h5" stroke="#2d4f9e" stroke-width="1"/><path d="M4.5 2v5" stroke="#2d4f9e"/></svg>
<svg style="position:absolute;left:68px;top:569px;" width="16" height="16" viewBox="0 0 16 16"><rect x="1.5" y="0.5" width="10" height="15" fill="#fff" stroke="#777"/><path d="M4 6l2.5-5 2.5 5M5 4.5h3" fill="none" stroke="#777" stroke-width="1.2"/><path d="M0 8v7l5-3.5z" fill="#4cb83a"/><path d="M11 9v6l5-3z" fill="#6d9ed8"/></svg>
<div class="t" style="left:89.5px;top:570px;font-size:11.5px;color:#000;transform:scaleX(0.9779);transform-origin:0 0;">Preprocessors</div>
<svg style="position:absolute;left:53px;top:592px;" width="9" height="9" viewBox="0 0 9 9"><defs><linearGradient id="bg28" x1="0" y1="0" x2="0" y2="1"><stop offset="0" stop-color="#fff"/><stop offset="1" stop-color="#e4e4e4"/></linearGradient></defs><rect x="0.5" y="0.5" width="8" height="8" rx="1" fill="url(#bg28)" stroke="#9a9a9a"/><path d="M2 4.5h5" stroke="#2d4f9e" stroke-width="1"/><path d="M4.5 2v5" stroke="#2d4f9e"/></svg>
<svg style="position:absolute;left:68px;top:587px;" width="16" height="16" viewBox="0 0 16 16"><rect x="0.5" y="3.5" width="15" height="10" fill="#fff" stroke="#666"/><path d="M2 11l2.3-6 2.3 6M3 9h2.6" fill="none" stroke="#888" stroke-width="1.1"/><path d="M8 6h6M8 8.5h6M8 11h6" stroke="#c8c8c8"/></svg>
<div class="t" style="left:89.5px;top:588px;font-size:11.5px;color:#000;">Forms</div>
<svg style="position:absolute;left:53px;top:610px;" width="9" height="9" viewBox="0 0 9 9"><defs><linearGradient id="bg29" x1="0" y1="0" x2="0" y2="1"><stop offset="0" stop-color="#fff"/><stop offset="1" stop-color="#e4e4e4"/></linearGradient></defs><rect x="0.5" y="0.5" width="8" height="8" rx="1" fill="url(#bg29)" stroke="#9a9a9a"/><path d="M2 4.5h5" stroke="#2d4f9e" stroke-width="1"/><path d="M4.5 2v5" stroke="#2d4f9e"/></svg>
<svg style="position:absolute;left:68px;top:605px;" width="16" height="16" viewBox="0 0 16 16"><rect x="0.5" y="0.5" width="11" height="15" fill="#fff" stroke="#777"/><rect x="7" y="2" width="3" height="3" fill="#c58ad8"/><path d="M2 7h8M2 9h8M2 11h8M2 13h8" stroke="#c8c8c8"/></svg>
<div class="t" style="left:89.5px;top:606px;font-size:11.5px;color:#000;transform:scaleX(1.0111);transform-origin:0 0;">Form Images</div>
<svg style="position:absolute;left:34px;top:628px;" width="9" height="9" viewBox="0 0 9 9"><defs><linearGradient id="bg30" x1="0" y1="0" x2="0" y2="1"><stop offset="0" stop-color="#fff"/><stop offset="1" stop-color="#e4e4e4"/></linearGradient></defs><rect x="0.5" y="0.5" width="8" height="8" rx="1" fill="url(#bg30)" stroke="#9a9a9a"/><path d="M2 4.5h5" stroke="#2d4f9e" stroke-width="1"/><path d="M4.5 2v5" stroke="#2d4f9e"/></svg>
<svg style="position:absolute;left:49px;top:623px;" width="16" height="16" viewBox="0 0 16 16"><path d="M0 8L4.5 3.8V12.2Z M9 3.8L16 8 9 12.2Z" fill="#fbc94a"/><rect x="4.6" y="0.8" width="7" height="14.4" rx="3" fill="none" stroke="#4a7fd0" stroke-width="1.8"/><path d="M6.5 3v10" stroke="#f5d060" stroke-width="1.2"/><rect x="8" y="5.5" width="3" height="5" fill="#fbd463"/></svg>
<div class="t" style="left:70.3px;top:624px;font-size:11.5px;color:#000;transform:scaleX(0.9798);transform-origin:0 0;">Therefore™ Portal</div>
<svg style="position:absolute;left:34px;top:646px;" width="9" height="9" viewBox="0 0 9 9"><defs><linearGradient id="bg31" x1="0" y1="0" x2="0" y2="1"><stop offset="0" stop-color="#fff"/><stop offset="1" stop-color="#e4e4e4"/></linearGradient></defs><rect x="0.5" y="0.5" width="8" height="8" rx="1" fill="url(#bg31)" stroke="#9a9a9a"/><path d="M2 4.5h5" stroke="#2d4f9e" stroke-width="1"/><path d="M4.5 2v5" stroke="#2d4f9e"/></svg>
<svg style="position:absolute;left:49px;top:641px;" width="16" height="16" viewBox="0 0 16 16"><path d="M8 5L3 13M8 5l5 8" stroke="#444"/><circle cx="8" cy="3.5" r="2.7" fill="#c99ad6" stroke="#9b3fc0" stroke-width="1.2"/></svg>
<div class="t" style="left:70.3px;top:642px;font-size:11.5px;color:#000;transform:scaleX(0.9591);transform-origin:0 0;">Therefore™ MFP Scan</div>
<div style="position:absolute;left:424px;top:80px;width:1006px;height:571px;background:#fff;border-left:1px solid #c8c8c8;border-top:1px solid #cfcfcf;border-right:1px solid #c8c8c8;box-sizing:border-box"></div>
<div style="position:absolute;left:665px;top:82px;width:1px;height:24px;background:#e5e5e5"></div>
<div style="position:absolute;left:794px;top:82px;width:1px;height:24px;background:#e5e5e5"></div>
<div style="position:absolute;left:1020px;top:82px;width:1px;height:24px;background:#e5e5e5"></div>
<div style="position:absolute;left:1427px;top:82px;width:1px;height:24px;background:#e5e5e5"></div>
<div class="t" style="left:430.5px;top:87px;font-size:11.5px;color:#000;transform:scaleX(0.9059);transform-origin:0 0;">Name</div>
<div class="t" style="left:670.8px;top:87px;font-size:11.5px;color:#000;transform:scaleX(0.8822);transform-origin:0 0;">Type</div>
<div class="t" style="left:799px;top:87px;font-size:11.5px;color:#000;transform:scaleX(1.0049);transform-origin:0 0;">Tenant</div>
<div class="t" style="left:1025.7px;top:87px;font-size:11.5px;color:#000;transform:scaleX(0.9410);transform-origin:0 0;">Issuer ID</div>
<div class="t" style="left:448.6px;top:109px;font-size:11.5px;color:#000;transform:scaleX(1.0108);transform-origin:0 0;">dev-792899.okta.com</div>
<div class="t" style="left:672.5px;top:109px;font-size:11.5px;color:#000;transform:scaleX(0.9795);transform-origin:0 0;">Okta</div>
<div class="t" style="left:800.8px;top:109px;font-size:11.5px;color:#000;transform:scaleX(1.0871);transform-origin:0 0;">ffwrrwrwrewgfdgfg</div>
<div class="t" style="left:1027.5px;top:109px;font-size:11.5px;color:#000;transform:scaleX(1.0741);transform-origin:0 0;">https://dev-792899.okta.com/oauth2/ffwrrwrwrewgfdgfg</div>
<div class="t" style="left:448.6px;top:128px;font-size:11.5px;color:#000;transform:scaleX(1.0462);transform-origin:0 0;">dev-skld4piw.auth0.com</div>
<div class="t" style="left:672.5px;top:128px;font-size:11.5px;color:#000;transform:scaleX(0.9693);transform-origin:0 0;">Generic OIDC</div>
<div class="t" style="left:1027.5px;top:128px;font-size:11.5px;color:#000;transform:scaleX(1.0782);transform-origin:0 0;">https://dev-skld4piw.auth0.com/</div>
<div class="t" style="left:448.6px;top:147px;font-size:11.5px;color:#000;transform:scaleX(1.0560);transform-origin:0 0;">google.com</div>
<div class="t" style="left:672.5px;top:147px;font-size:11.5px;color:#000;transform:scaleX(0.9693);transform-origin:0 0;">Generic OIDC</div>
<div class="t" style="left:1027.5px;top:147px;font-size:11.5px;color:#000;transform:scaleX(1.0733);transform-origin:0 0;">https://accounts.google.com</div>
<div class="t" style="left:448.6px;top:166px;font-size:11.5px;color:#000;transform:scaleX(1.0828);transform-origin:0 0;">tfodev.onmicrosoft.com</div>
<div class="t" style="left:672.5px;top:166px;font-size:11.5px;color:#000;transform:scaleX(1.0236);transform-origin:0 0;">Azure Active Directory</div>
<div class="t" style="left:800.8px;top:166px;font-size:11.5px;color:#000;">2e1c3cf5-1a65-46bc-8b7d-533b99409c1c</div>
<div class="t" style="left:1027.5px;top:166px;font-size:11.5px;color:#000;transform:scaleX(1.0338);transform-origin:0 0;">https://sts.windows.net/2e1c3cf5-1a65-46bc-8b7d-533b99409c1c/</div>
<div class="t" style="left:448.6px;top:185px;font-size:11.5px;color:#000;transform:scaleX(1.0692);transform-origin:0 0;">therefore-corporation-dev.onelogin.com</div>
<div class="t" style="left:672.5px;top:185px;font-size:11.5px;color:#000;transform:scaleX(0.9693);transform-origin:0 0;">Generic OIDC</div>
<div class="t" style="left:1027.5px;top:185px;font-size:11.5px;color:#000;transform:scaleX(1.0939);transform-origin:0 0;">https://openid-connect.onelogin.com/oidc</div>
<div style="position:absolute;left:470px;top:229px;width:748px;height:354px;background:#f0f0f0;border:1px solid #6f6f6f;box-sizing:border-box;box-shadow:0 4px 18px rgba(0,0,0,0.30)"></div>
<div style="position:absolute;left:471px;top:230px;width:746px;height:30px;background:#fff"></div>
<div class="t" style="left:479.7px;top:238px;font-size:12px;color:#000;transform:scaleX(0.9579);transform-origin:0 0;">External Directories</div>
<div class="t" style="left:482px;top:271px;font-size:11px;color:#000;transform:scaleX(0.9940);transform-origin:0 0;">Add external user directories, which should be integrated for authentication and user/group management into Therefore™.</div>
<div style="position:absolute;left:482px;top:315px;width:725px;height:200px;background:#fff;border:1px solid #828790;box-sizing:border-box"></div>
<div style="position:absolute;left:683px;top:317px;width:1px;height:24px;background:#e5e5e5"></div>
<div style="position:absolute;left:833px;top:317px;width:1px;height:24px;background:#e5e5e5"></div>
<div style="position:absolute;left:983px;top:317px;width:1px;height:24px;background:#e5e5e5"></div>
<div style="position:absolute;left:1096px;top:317px;width:1px;height:24px;background:#e5e5e5"></div>
<div style="position:absolute;left:484px;top:357px;width:721px;height:1px;background:#f0f0f0"></div>
<div style="position:absolute;left:484px;top:374px;width:721px;height:1px;background:#f0f0f0"></div>
<div style="position:absolute;left:484px;top:391px;width:721px;height:1px;background:#f0f0f0"></div>
<div style="position:absolute;left:484px;top:408px;width:721px;height:1px;background:#f0f0f0"></div>
<div style="position:absolute;left:484px;top:425px;width:721px;height:1px;background:#f0f0f0"></div>
<div style="position:absolute;left:484px;top:442px;width:721px;height:1px;background:#f0f0f0"></div>
<div style="position:absolute;left:484px;top:459px;width:721px;height:1px;background:#f0f0f0"></div>
<div style="position:absolute;left:484px;top:476px;width:721px;height:1px;background:#f0f0f0"></div>
<div style="position:absolute;left:484px;top:493px;width:721px;height:1px;background:#f0f0f0"></div>
<div style="position:absolute;left:484px;top:510px;width:721px;height:1px;background:#f0f0f0"></div>
<div style="position:absolute;left:684px;top:341px;width:1px;height:172px;background:#f0f0f0"></div>
<div style="position:absolute;left:834px;top:341px;width:1px;height:172px;background:#f0f0f0"></div>
<div style="position:absolute;left:984px;top:341px;width:1px;height:172px;background:#f0f0f0"></div>
<div style="position:absolute;left:1097px;top:341px;width:1px;height:172px;background:#f0f0f0"></div>
<div class="t" style="left:489.5px;top:322px;font-size:11px;color:#000;transform:scaleX(0.9201);transform-origin:0 0;">Name</div>
<div class="t" style="left:690px;top:322px;font-size:11px;color:#000;transform:scaleX(0.9807);transform-origin:0 0;">Type</div>
<div class="t" style="left:840px;top:322px;font-size:11px;color:#000;transform:scaleX(1.0263);transform-origin:0 0;">Tenant</div>
<div class="t" style="left:989.4px;top:322px;font-size:11px;color:#000;transform:scaleX(0.9837);transform-origin:0 0;">Issuer ID</div>
<div class="t" style="left:490px;top:343px;font-size:11px;color:#000;transform:scaleX(0.9925);transform-origin:0 0;">dev-792899.okta.com</div>
<div class="t" style="left:690px;top:343px;font-size:11px;color:#000;transform:scaleX(0.9641);transform-origin:0 0;">Okta</div>
<div class="t" style="left:840px;top:343px;font-size:11px;color:#000;transform:scaleX(1.0444);transform-origin:0 0;">ffwrrwrwrewgfdgfg</div>
<div class="t" style="left:989.5px;top:343px;font-size:11px;color:#000;transform:scaleX(1.0693);transform-origin:0 0;">https://dev-79289...</div>
<div class="t" style="left:490px;top:360px;font-size:11px;color:#000;transform:scaleX(0.9880);transform-origin:0 0;">dev-skld4piw.auth0.com</div>
<div class="t" style="left:690px;top:360px;font-size:11px;color:#000;transform:scaleX(0.9265);transform-origin:0 0;">Generic OIDC</div>
<div class="t" style="left:989.5px;top:360px;font-size:11px;color:#000;transform:scaleX(1.0557);transform-origin:0 0;">https://dev-skld4p...</div>
<div class="t" style="left:490px;top:377px;font-size:11px;color:#000;transform:scaleX(0.9582);transform-origin:0 0;">google.com</div>
<div class="t" style="left:690px;top:377px;font-size:11px;color:#000;transform:scaleX(0.9265);transform-origin:0 0;">Generic OIDC</div>
<div class="t" style="left:989.5px;top:377px;font-size:11px;color:#000;transform:scaleX(1.0719);transform-origin:0 0;">https://accounts....</div>
<div class="t" style="left:490px;top:394px;font-size:11px;color:#000;transform:scaleX(1.0259);transform-origin:0 0;">therefore-corporation-dev.onelogin.c...</div>
<div class="t" style="left:690px;top:394px;font-size:11px;color:#000;transform:scaleX(0.9265);transform-origin:0 0;">Generic OIDC</div>
<div class="t" style="left:989.5px;top:394px;font-size:11px;color:#000;transform:scaleX(1.0575);transform-origin:0 0;">https://openid-co...</div>
<div class="t" style="left:490px;top:411px;font-size:11px;color:#000;transform:scaleX(1.0097);transform-origin:0 0;">tfodev.onmicrosoft.com</div>
<div class="t" style="left:690px;top:411px;font-size:11px;color:#000;transform:scaleX(0.9889);transform-origin:0 0;">Azure Active Directory</div>
<div class="t" style="left:840px;top:411px;font-size:11px;color:#000;transform:scaleX(1.0039);transform-origin:0 0;">2e1c3cf5-1a65-46bc-8b7...</div>
<div class="t" style="left:989.5px;top:411px;font-size:11px;color:#000;transform:scaleX(1.0676);transform-origin:0 0;">https://sts.windo...</div>
<div style="position:absolute;left:483px;top:525px;width:73px;height:21px;background:#e1e1e1;border:1px solid #adadad;box-sizing:border-box"></div>
<div style="position:absolute;left:561px;top:525px;width:73px;height:21px;background:#e1e1e1;border:1px solid #adadad;box-sizing:border-box"></div>
<div style="position:absolute;left:639px;top:525px;width:73px;height:21px;background:#e1e1e1;border:1px solid #adadad;box-sizing:border-box"></div>
<div style="position:absolute;left:1053px;top:549px;width:73px;height:21px;background:#e1e1e1;border:2px solid #0078d7;box-sizing:border-box"></div>
<div style="position:absolute;left:1132px;top:549px;width:73px;height:21px;background:#e1e1e1;border:1px solid #adadad;box-sizing:border-box"></div>
<div style="position:absolute;left:542px;top:528px;width:1px;height:15px;background:#505050"></div>
<svg style="position:absolute;left:544px;top:533px" width="9" height="6"><path d="M0 0H9L4.5 5Z" fill="#000"/></svg>
<div style="position:absolute;left:620px;top:528px;width:1px;height:15px;background:#505050"></div>
<svg style="position:absolute;left:622px;top:533px" width="9" height="6"><path d="M0 0H9L4.5 5Z" fill="#000"/></svg>
<div class="t" style="left:501.5px;top:529px;font-size:11.5px;color:#000;transform:scaleX(0.9038);transform-origin:0 0;">Add</div>
<div class="t" style="left:574.4px;top:529px;font-size:11.5px;color:#000;transform:scaleX(0.9862);transform-origin:0 0;">Edit...</div>
<div class="t" style="left:655.3px;top:529px;font-size:11.5px;color:#000;transform:scaleX(0.9036);transform-origin:0 0;">Remove</div>
<div class="t" style="left:1081px;top:553px;font-size:11.5px;color:#000;transform:scaleX(0.8782);transform-origin:0 0;">OK</div>
<div class="t" style="left:1151px;top:553px;font-size:11.5px;color:#000;transform:scaleX(0.8935);transform-origin:0 0;">Cancel</div>
<div style="position:absolute;left:50px;top:167px;width:178px;height:30px;border:3px solid #ff0000;box-sizing:border-box"></div>
<div style="position:absolute;left:479px;top:519px;width:86px;height:34px;border:3px solid #ff0000;box-sizing:border-box"></div>
<div style="position:absolute;left:1212px;top:572px;width:2px;height:2px;background:#b8b8b8"></div>
<div style="position:absolute;left:1209px;top:575px;width:2px;height:2px;background:#b8b8b8"></div>
<div style="position:absolute;left:1212px;top:575px;width:2px;height:2px;background:#b8b8b8"></div>
<div style="position:absolute;left:1206px;top:578px;width:2px;height:2px;background:#b8b8b8"></div>
<div style="position:absolute;left:1209px;top:578px;width:2px;height:2px;background:#b8b8b8"></div>
<div style="position:absolute;left:1212px;top:578px;width:2px;height:2px;background:#b8b8b8"></div>
<svg style="position:absolute;left:0px;top:0px;pointer-events:none" width="1438" height="651" viewBox="0 0 1438 651"><defs><filter id="sh" x="-10%" y="-10%" width="130%" height="130%"><feGaussianBlur in="SourceAlpha" stdDeviation="1.2"/><feOffset dx="1.5" dy="1.5"/><feComponentTransfer><feFuncA type="linear" slope="0.35"/></feComponentTransfer><feMerge><feMergeNode/><feMergeNode in="SourceGraphic"/></feMerge></filter></defs><g filter="url(#sh)"><path d="M232 192L467 363.5" stroke="#ff0000" stroke-width="2.2" stroke-linecap="round"/><path d="M474 369L462 365.6L467.2 358.8Z" fill="#ff0000"/></g></svg>
<svg style="position:absolute;left:340px;top:214px;" width="16" height="22" viewBox="0 0 16 22"><path d="M1.5 1.5V17.5L5.3 14L8.3 19.3L10.7 18.2L8 13H13Z" fill="#fff" stroke="#1a1a1a" stroke-width="1.2" stroke-linejoin="round"/></svg>
</body></html>
